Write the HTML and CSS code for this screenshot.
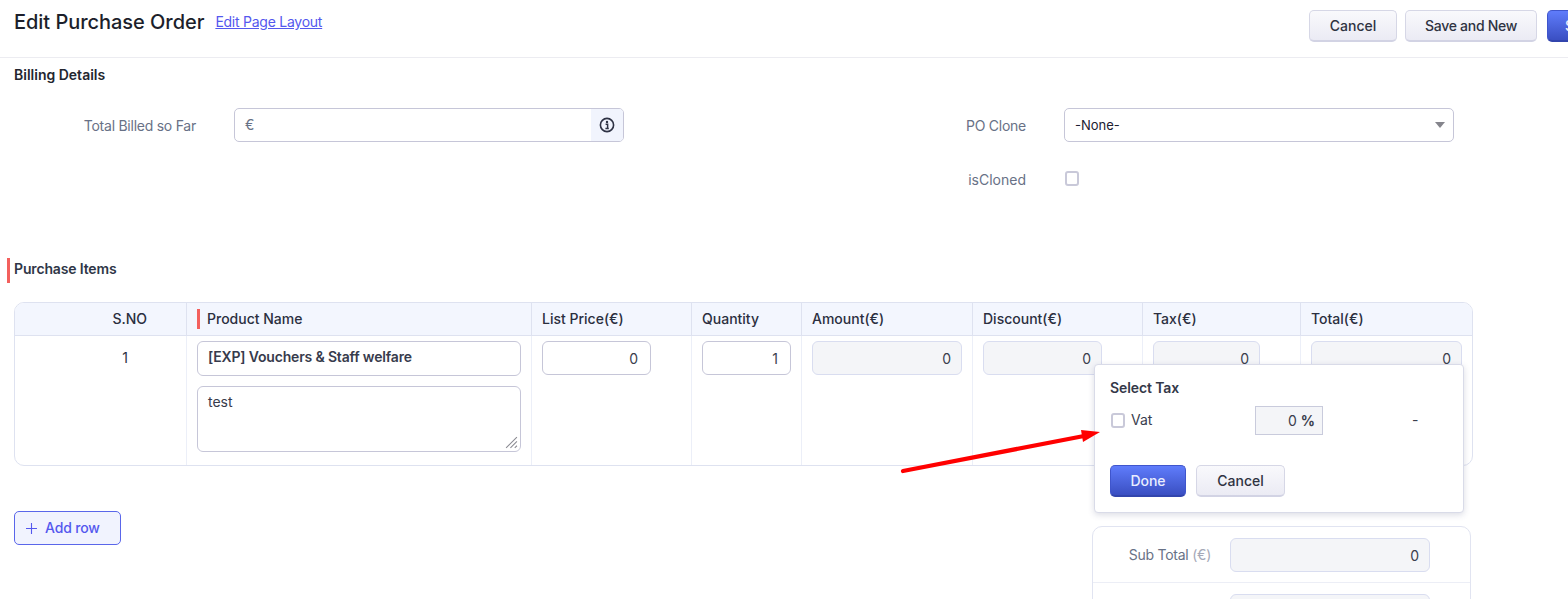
FILE: index.html
```html
<!DOCTYPE html>
<html lang="en">
<head>
<meta charset="utf-8">
<title>Edit Purchase Order</title>
<link rel="stylesheet" href="styles.css">
</head>
<body>
<div class="page">
  <header class="topbar">
    <div class="title-group">
      <h1 class="title">Edit Purchase Order</h1>
      <a class="layout-link" href="#">Edit Page Layout</a>
    </div>
    <div class="actions">
      <button class="btn btn-light btn-top-cancel">Cancel</button>
      <button class="btn btn-light btn-save-new">Save and New</button>
      <button class="btn btn-primary btn-save">Save</button>
    </div>
  </header>

  <h2 class="billing-title">Billing Details</h2>
  <section class="billing-grid">
    <label class="field-label">Total Billed so Far</label>
    <div class="currency-field">
      <span class="currency">€</span>
      <span class="info-addon">
        <svg class="info-icon" viewBox="0 0 16 16" aria-hidden="true">
          <circle cx="8" cy="8" r="6.6" fill="none" stroke="#2e3244" stroke-width="1.6"/>
          <circle cx="8" cy="4.9" r="1.2" fill="#2e3244"/>
          <path d="M6.6 7.2h2v4M6.4 11.4h3.4" fill="none" stroke="#2e3244" stroke-width="1.5"/>
        </svg>
      </span>
    </div>
    <label class="field-label">PO Clone</label>
    <div class="select-field">
      <span>-None-</span>
      <span class="caret"></span>
    </div>
    <label class="field-label cloned-label">isCloned</label>
    <div class="check-cell"><span class="checkbox"></span></div>
  </section>

  <h2 class="section-title">Purchase Items</h2>

  <section class="items-table">
    <div class="cell head sno">S.NO</div>
    <div class="cell head product-head">Product Name</div>
    <div class="cell head">List Price(€)</div>
    <div class="cell head">Quantity</div>
    <div class="cell head">Amount(€)</div>
    <div class="cell head">Discount(€)</div>
    <div class="cell head">Tax(€)</div>
    <div class="cell head last">Total(€)</div>

    <div class="cell body sno-value">1</div>
    <div class="cell body product-cell">
      <div class="box product-name">[EXP] Vouchers &amp; Staff welfare</div>
      <div class="box product-desc">test<svg class="grip" viewBox="0 0 12 12" aria-hidden="true"><path d="M11 1 1 11M11 5 5 11M11 9 9 11" stroke="#8b8b93" stroke-width="1" fill="none"/></svg></div>
    </div>
    <div class="cell body"><div class="box num editable">0</div></div>
    <div class="cell body"><div class="box num editable">1</div></div>
    <div class="cell body"><div class="box num off">0</div></div>
    <div class="cell body"><div class="box num off">0</div></div>
    <div class="cell body"><div class="box num off">0</div></div>
    <div class="cell body last"><div class="box num off">0</div></div>
  </section>

  <section class="lower">
    <button class="add-row">
      <svg class="plus" viewBox="0 0 11 11" aria-hidden="true"><path d="M5.5 0v11M0 5.5h11" stroke="#5458ee" stroke-width="1.1" fill="none"/></svg>
      Add row
    </button>
    <div class="totals">
      <div class="total-row">
        <span class="total-label">Sub Total <span class="muted">(€)</span></span>
        <div class="box num off total-input">0</div>
      </div>
      <div class="total-row">
        <span class="total-label"></span>
        <div class="box num off total-input"></div>
      </div>
    </div>
  </section>

  <div class="tax-popup">
    <div class="popup-title">Select Tax</div>
    <div class="tax-row">
      <span class="checkbox"></span>
      <span class="tax-name">Vat</span>
      <span class="tax-rate">0 <b>%</b></span>
      <span class="tax-dash">-</span>
    </div>
    <div class="popup-actions">
      <button class="btn btn-primary btn-done">Done</button>
      <button class="btn btn-light btn-popup-cancel">Cancel</button>
    </div>
  </div>

  <svg class="arrow" viewBox="0 0 220 60" aria-hidden="true">
    <path d="M5 49 186 14" stroke="#ff0000" stroke-width="4.2" stroke-linecap="round" fill="none"/>
    <path d="M202 10 183 8 185 20Z" fill="#ff0000"/>
  </svg>
</div>
</body>
</html>
```
FILE: styles.css
```css
* { box-sizing: border-box; }
html, body { margin: 0; padding: 0; }
body {
  background: #fff;
  font-family: Inter, "Liberation Sans", sans-serif;
  color: #2b2f3f;
  font-size: 14px;
  overflow: hidden;
}
.page { position: relative; width: 1568px; height: 599px; overflow: hidden; }

.topbar {
  height: 58px;
  border-bottom: 1px solid #ececf1;
  display: flex;
  justify-content: space-between;
  padding: 10px 0 0 14px;
  width: 1600px;
}
.title-group { display: flex; align-items: baseline; gap: 11px; }
.title { margin: 0; font-size: 20px; font-weight: 500; color: #1c1f2b; line-height: 25px; letter-spacing: -.04px; }
.layout-link { color: #5458ee; font-size: 14px; letter-spacing: -.25px; position: relative; top: -2px; }
.actions { display: flex; gap: 8px; height: 32px; }
.btn {
  font-family: inherit;
  font-size: 14px;
  font-weight: 500;
  border-radius: 5px;
  padding: 0;
  height: 32px;
}
.btn-light {
  color: #2f3342;
  background: linear-gradient(#f9f9fc, #ebebf4);
  border: 1px solid #d6d7e6;
  border-bottom: 2px solid #d2d3e4;
}
.btn-primary {
  color: #e9edff;
  background: linear-gradient(#5f7cfb, #3a4fc2);
  border: 1px solid #3f55cc;
  border-bottom: 2px solid #3245ad;
}
.btn-top-cancel { width: 88px; }
.btn-save-new { width: 132px; margin-right: 2px; letter-spacing: -.27px; }
.btn-save { width: 53px; text-align: left; padding-left: 17px; }

.billing-title {
  margin: 8px 0 0 14px;
  font-size: 14px;
  font-weight: 600;
  line-height: 17px;
  color: #23262f;
}
.billing-grid {
  margin-top: 25px;
  display: grid;
  grid-template-columns: 196px 390px 364px 390px;
  grid-template-rows: 34px 34px;
  gap: 20px 38px;
}
.field-label {
  color: #687186;
  text-align: right;
  line-height: 35px;
  letter-spacing: -.25px;
}
.cloned-label { grid-column: 3; letter-spacing: 0; line-height: 36px; }

.currency-field, .select-field {
  height: 34px;
  border: 1px solid #c6c6d8;
  border-radius: 5px;
  display: flex;
  align-items: center;
  justify-content: space-between;
  background: #fff;
}
.currency { color: #687186; padding-left: 10px; margin-top: -2px; }
.info-addon {
  width: 32px;
  height: 32px;
  background: #f1f4fd;
  border-radius: 0 4px 4px 0;
  display: flex;
  align-items: center;
  justify-content: center;
}
.info-icon { width: 16px; height: 16px; }
.select-field { padding: 0 8px 0 10px; color: #1d2030; font-size: 13px; }
.caret {
  width: 0; height: 0;
  border-left: 5px solid transparent;
  border-right: 5px solid transparent;
  border-top: 6px solid #85858c;
}
.check-cell { display: flex; align-items: center; height: 34px; margin-top: -1px; }
.checkbox {
  display: inline-block;
  width: 14px; height: 15px;
  border: 2px solid #c9c9d9;
  border-radius: 3px;
  background: #fff;
  flex: none;
}
.check-cell .checkbox { margin-left: 1px; }

.section-title {
  margin: 62px 0 0 7px;
  border-left: 3px solid #f3605d;
  padding: 0 0 0 4px;
  height: 25px;
  font-size: 14px;
  font-weight: 600;
  line-height: 21px;
  letter-spacing: -.15px;
  color: #2f3647;
}

.items-table {
  margin: 19px 0 0 14px;
  width: 1459px;
  height: 164px;
  border: 1px solid #dee2f0;
  border-radius: 10px;
  display: grid;
  grid-template-columns: 172px 345px 160px 110px 171px 170px 158px 171px;
  grid-template-rows: 33px 1fr;
  overflow: hidden;
}
.cell { border-right: 1px solid #eceff8; padding: 5px 10px; }
.cell.last { border-right: 0; }
.head {
  background: #f3f6fe;
  border-bottom: 1px solid #dee2f0;
  border-right-color: #dee2f0;
  color: #2b2f3f;
  font-weight: 500;
  line-height: 22px;
}
.sno { text-align: right; padding-right: 39px; }
.product-head { position: relative; padding-left: 20px; }
.product-head::before {
  content: "";
  position: absolute;
  left: 10px; top: 6px;
  width: 3px; height: 20px;
  background: #f3605d;
}
.sno-value { text-align: right; padding: 13px 58px 0 0; }
.box {
  border: 1px solid #c6c6d8;
  border-radius: 6px;
  height: 34px;
  line-height: 33px;
  padding: 0 10px;
  background: #fff;
}
.num { text-align: right; color: #3a3e4d; }
.editable { padding-right: 12px; }
.off { background: #f4f5f8; border-color: #d9ddf0; }
.product-name { font-weight: 600; height: 35px; color: #373b4c; line-height: 29px; letter-spacing: -.17px; }
.product-desc {
  height: 66px;
  margin-top: 10px;
  line-height: 30px;
  position: relative;
  color: #373b4c;
}
.grip { position: absolute; right: 2px; bottom: 2px; width: 13px; height: 13px; }

.lower {
  margin: 45px 0 0 14px;
  width: 1457px;
  display: flex;
  justify-content: space-between;
  align-items: flex-start;
}
.add-row {
  width: 107px;
  height: 34px;
  font-family: inherit;
  font-size: 14px;
  font-weight: 500;
  letter-spacing: -.15px;
  color: #5458ee;
  background: #f1f3fe;
  border: 1px solid #5a66ea;
  border-radius: 5px;
  padding: 0 0 2px 11px;
  display: flex;
  align-items: center;
  gap: 8px;
}
.plus { width: 11px; height: 11px; flex: none; margin-top: 3px; }
.totals {
  width: 379px;
  height: 120px;
  margin-top: 15px;
  border: 1px solid #e1e4f1;
  border-radius: 10px;
}
.total-row {
  display: flex;
  align-items: center;
  height: 56px;
  padding: 11px 0;
  border-bottom: 1px solid #eceef6;
}
.total-label { width: 118px; text-align: right; color: #687186; white-space: nowrap; letter-spacing: -.25px; }
.muted { color: #a5a9b8; }
.total-input { width: 200px; margin-left: 19px; flex: none; padding-right: 10px; }

.tax-popup {
  position: absolute;
  left: 1094px; top: 364px;
  width: 370px; height: 149px;
  background: #fff;
  border: 1px solid #d9dbe8;
  border-radius: 4px;
  box-shadow: 0 2px 6px rgba(60, 65, 110, .18);
  padding: 14px 15px;
}
.popup-title { font-weight: 600; color: #343848; line-height: 18px; letter-spacing: -.1px; }
.tax-row { display: flex; align-items: center; height: 29px; margin-top: 9px; position: relative; }
.tax-row .checkbox { margin-left: 1px; }
.tax-name { margin-left: 6px; color: #3a3e4d; margin-top: -3px; }
.tax-rate {
  position: absolute;
  left: 145px; top: 0;
  width: 68px; height: 29px;
  background: #f4f5f8;
  border: 1px solid #c9cbdc;
  text-align: right;
  line-height: 28px;
  padding-right: 7px;
  color: #3a3e4d;
}
.tax-rate b { font-weight: 700; }
.tax-dash { position: absolute; left: 302px; top: 5px; color: #3a3e4d; }
.popup-actions { display: flex; gap: 10px; margin-top: 30px; }
.btn-done { width: 76px; }
.btn-popup-cancel { width: 89px; }

.items-table .cell:nth-child(11) .box { width: 109px; }
.items-table .cell:nth-child(14) .box { width: 119px; }
.items-table .cell:nth-child(15) .box { width: 107px; }
.items-table .cell:nth-child(16) .box { width: 151px; }

.arrow {
  position: absolute;
  left: 898px; top: 422px;
  width: 220px; height: 60px;
}
```
